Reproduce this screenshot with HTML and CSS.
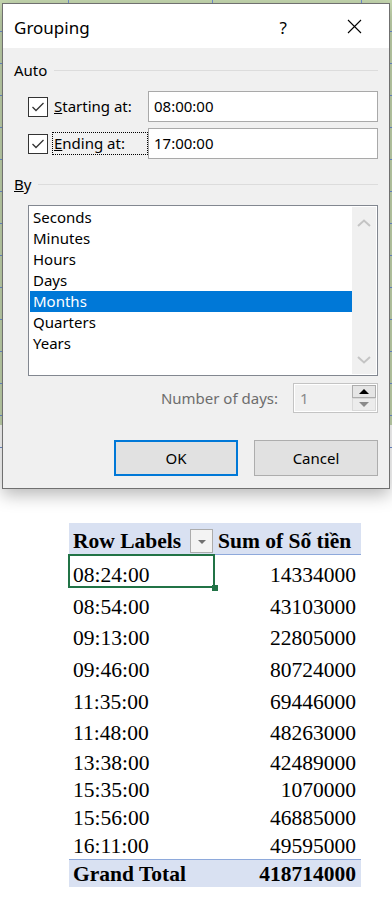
FILE: index.html
```html
<!DOCTYPE html>
<html lang="vi">
<head>
    <meta charset="UTF-8">
    <meta name="viewport" content="width=device-width, initial-scale=1.0">
    <title>Grouping</title>
    <link rel="stylesheet" href="styles.css">
</head>
<body>
    <div class="sheet">
        <div class="dialog">
            <div class="titlebar">
                <span class="title">Grouping</span>
                <span class="help">?</span>
                <svg class="close" width="15" height="15" viewBox="0 0 15 15">
                    <path d="M1 1 L14 14 M14 1 L1 14" stroke="#000" stroke-width="1.1" fill="none"/>
                </svg>
            </div>

            <div class="dialog-body">
                <div class="group-head"><span>Auto</span></div>

                <div class="auto-row first">
                    <span class="check">
                        <svg width="18" height="18" viewBox="0 0 18 18"><path d="M3.5 9 L7 12.5 L14.5 5" stroke="#333" stroke-width="1.3" fill="none"/></svg>
                    </span>
                    <label class="check-label"><u>S</u>tarting at:</label>
                    <div class="field">08:00:00</div>
                </div>
                <div class="auto-row">
                    <span class="check">
                        <svg width="18" height="18" viewBox="0 0 18 18"><path d="M3.5 9 L7 12.5 L14.5 5" stroke="#333" stroke-width="1.3" fill="none"/></svg>
                    </span>
                    <label class="check-label focus"><u>E</u>nding at:</label>
                    <div class="field">17:00:00</div>
                </div>

                <div class="group-head by"><span><u>B</u>y</span></div>

                <div class="listbox">
                    <ul class="list-items">
                        <li>Seconds</li>
                        <li>Minutes</li>
                        <li>Hours</li>
                        <li>Days</li>
                        <li class="selected">Months</li>
                        <li>Quarters</li>
                        <li>Years</li>
                    </ul>
                    <div class="scrollbar">
                        <svg width="14" height="8" viewBox="0 0 14 8"><path d="M1 7 L7 1.5 L13 7" stroke="#c4c4c4" stroke-width="2" fill="none"/></svg>
                        <svg width="14" height="8" viewBox="0 0 14 8"><path d="M1 1 L7 6.5 L13 1" stroke="#c4c4c4" stroke-width="2" fill="none"/></svg>
                    </div>
                </div>

                <div class="days-row">
                    <span class="days-label">Number of days:</span>
                    <div class="spin">
                        <span class="spin-value">1</span>
                        <div class="spin-buttons">
                            <span class="spin-up"></span>
                            <span class="spin-down"></span>
                        </div>
                    </div>
                </div>

                <div class="buttons">
                    <button class="btn btn-default">OK</button>
                    <button class="btn">Cancel</button>
                </div>
            </div>
        </div>
    </div>

    <div class="pivot">
        <div class="cell head">Row Labels <span class="filter"></span></div>
        <div class="cell head num">Sum of Số tiền</div>

        <div class="cell active">08:24:00</div><div class="cell num">14334000</div>
        <div class="cell">08:54:00</div><div class="cell num">43103000</div>
        <div class="cell">09:13:00</div><div class="cell num">22805000</div>
        <div class="cell">09:46:00</div><div class="cell num">80724000</div>
        <div class="cell">11:35:00</div><div class="cell num">69446000</div>
        <div class="cell">11:48:00</div><div class="cell num">48263000</div>
        <div class="cell">13:38:00</div><div class="cell num">42489000</div>
        <div class="cell">15:35:00</div><div class="cell num">1070000</div>
        <div class="cell">15:56:00</div><div class="cell num">46885000</div>
        <div class="cell">16:11:00</div><div class="cell num">49595000</div>

        <div class="cell total">Grand Total</div>
        <div class="cell total num">418714000</div>
    </div>
</body>
</html>
```

FILE: styles.css
```css
body {
    margin: 0;
    background-color: #fff;
    color: #000;
    font-family: "Noto Sans", sans-serif;
}

/* spreadsheet behind the dialog */
.sheet {
    position: relative;
    height: 523px;
    background:
        linear-gradient(to right, transparent 68px, #6f8fd0 68px 69px, transparent 69px 212px, #6f8fd0 212px 213px, transparent 213px 361px, #6f8fd0 361px 362px, transparent 362px) 0 0 / 100% 460px no-repeat,
        repeating-linear-gradient(to bottom, transparent 0 31px, #6f8fd0 31px 32px) 0 0 / 100% 460px no-repeat,
        linear-gradient(to bottom, #c6d8b0 0 425px, #fff 425px);
}

.dialog {
    position: absolute;
    left: 2px;
    top: 3px;
    width: 388px;
    height: 486px;
    box-sizing: border-box;
    border: 1px solid #707070;
    background-color: #f0f0f0;
    box-shadow: 0 6px 16px rgba(0, 0, 0, 0.28);
}

.titlebar {
    display: flex;
    align-items: center;
    height: 44px;
    padding-left: 11px;
    background-color: #fff;
}

.title {
    font-size: 17px;
    padding-top: 2px;
}

.help {
    margin-left: auto;
    margin-right: 60px;
    font-size: 17px;
    padding-top: 2px;
}

.close {
    margin-right: 27px;
}

.dialog-body {
    padding: 0 11px;
    font-size: 15px;
}

.group-head {
    display: flex;
    align-items: center;
    height: 20px;
    margin-top: 12px;
}

.group-head::after {
    content: "";
    flex: 1;
    margin-left: 7px;
    border-top: 1px solid #dcdcdc;
}

.group-head.by {
    margin-top: 15px;
}

.auto-row {
    display: flex;
    align-items: center;
    height: 31px;
    padding-left: 14px;
    margin-top: 6px;
}

.auto-row.first {
    margin-top: 11px;
}

.check {
    display: flex;
    align-items: center;
    justify-content: center;
    width: 20px;
    height: 20px;
    box-sizing: border-box;
    border: 1px solid #333;
    background-color: #fff;
}

.check-label {
    width: 96px;
    height: 23px;
    box-sizing: border-box;
    margin-left: 4px;
    padding-left: 1px;
    line-height: 21px;
    border: 1px dotted transparent;
}

.check-label.focus {
    border-color: #000;
}

.field {
    width: 230px;
    height: 31px;
    box-sizing: border-box;
    padding-left: 5px;
    line-height: 29px;
    border: 1px solid #a9a9a9;
    background-color: #fff;
}

.listbox {
    display: flex;
    height: 171px;
    box-sizing: border-box;
    margin: 11px 0 0 14px;
    padding: 1px;
    border: 1px solid #828790;
    background-color: #fff;
}

.list-items {
    width: 322px;
    margin: 0;
    padding: 0;
    list-style: none;
}

.list-items li {
    height: 21px;
    line-height: 21px;
    padding-left: 3px;
}

.list-items li.selected {
    background-color: #0078d7;
    color: #fff;
}

.scrollbar {
    display: flex;
    flex-direction: column;
    justify-content: space-between;
    align-items: center;
    width: 24px;
    padding: 12px 0 10px;
    background-color: #f0f0f0;
}

.days-row {
    display: flex;
    justify-content: flex-end;
    align-items: center;
    height: 30px;
    margin-top: 7px;
}

.days-label {
    margin-right: 15px;
    color: #6d6d6d;
}

.spin {
    display: flex;
    width: 85px;
    height: 30px;
    box-sizing: border-box;
    border: 1px solid #c4c4c4;
    background-color: #fff;
    padding: 1px;
}

.spin-value {
    flex: 1;
    padding-left: 5px;
    line-height: 26px;
    color: #8a8a8a;
    background-color: #f0f0f0;
}

.spin-buttons {
    display: flex;
    flex-direction: column;
    width: 24px;
    background-color: #f0f0f0;
}

.spin-up,
.spin-down {
    position: relative;
    height: 13px;
    box-sizing: border-box;
}

.spin-up {
    border: 1px solid #adadad;
    background-color: #e5e5e5;
}

.spin-down {
    border: 1px solid #d9d9d9;
    background-color: #ececec;
}

.spin-up::after,
.spin-down::after {
    content: "";
    position: absolute;
    left: 50%;
    top: 3px;
    margin-left: -5px;
    border-left: 5px solid transparent;
    border-right: 5px solid transparent;
}

.spin-up::after {
    border-bottom: 5px solid #000;
}

.spin-down::after {
    border-top: 5px solid #8a8a8a;
}

.buttons {
    display: flex;
    justify-content: flex-end;
    gap: 16px;
    margin-top: 27px;
}

.btn {
    width: 124px;
    height: 36px;
    border: 1px solid #adadad;
    background-color: #e1e1e1;
    font-family: "Noto Sans", sans-serif;
    font-size: 15px;
    color: #000;
}

.btn-default {
    border: 2px solid #0078d7;
}

/* pivot table */
.pivot {
    display: grid;
    grid-template-columns: 146px 146px;
    grid-template-rows: 32px 33px 32px 31px 32px 32px 31px 30px 27px 28px 28px 28px;
    margin-left: 69px;
    font-family: "Liberation Serif", serif;
    font-size: 21.5px;
}

.cell {
    display: flex;
    align-items: flex-end;
    box-sizing: border-box;
    padding: 0 5px 1px 4px;
    line-height: 24px;
    white-space: nowrap;
}

.cell.num {
    justify-content: flex-end;
}

.cell.head {
    background-color: #d9e1f2;
    border-bottom: 1px solid #8ea9db;
    font-weight: bold;
}

.cell.head:first-child {
    padding-right: 2px;
}

.cell.head.num {
    justify-content: flex-start;
    padding-left: 3px;
}

.filter {
    position: relative;
    width: 23px;
    height: 24px;
    box-sizing: border-box;
    margin-left: auto;
    border: 1px solid #acacac;
    background-color: #f3f3f3;
}

.filter::after {
    content: "";
    position: absolute;
    left: 7px;
    top: 10px;
    border-left: 4px solid transparent;
    border-right: 4px solid transparent;
    border-top: 4px solid #707070;
}

.cell.total {
    background-color: #d9e1f2;
    border-top: 1px solid #8ea9db;
    font-weight: bold;
}

.cell.active {
    position: relative;
}

.cell.active::before {
    content: "";
    position: absolute;
    top: -1px;
    left: -1px;
    right: 0;
    bottom: 0;
    border: 2px solid #217346;
}

.cell.active::after {
    content: "";
    position: absolute;
    right: -3px;
    bottom: -3px;
    width: 6px;
    height: 6px;
    background-color: #217346;
}
```
